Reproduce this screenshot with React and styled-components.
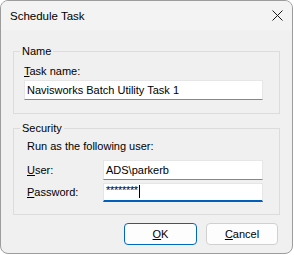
import React from 'react'
import styled, { createGlobalStyle } from 'styled-components'

const Global = createGlobalStyle`
  html, body { margin: 0; background: #fff; }
  body { font-family: "Liberation Sans", Arial, sans-serif; font-size: 11px; color: #000; }
`

const Window = styled.div`
  width: 293px;
  height: 254px;
  box-sizing: border-box;
  border: 1px solid #9c9c9c;
  border-radius: 8px;
  overflow: hidden;
  display: flex;
  flex-direction: column;
  background: #f0f0f0;
`

const TitleBar = styled.div`
  height: 29px;
  flex: none;
  display: flex;
  align-items: center;
  justify-content: space-between;
  padding: 0 9px 0 9px;
  background: #f3f3f3;
  font-size: 11.5px;
`

const Body = styled.div`
  flex: 1;
  display: flex;
  flex-direction: column;
  padding: 15px 12px 0 12px;
`

const Group = styled.fieldset`
  margin: 0 0 ${p => p.$gap || 0}px 0;
  padding: 0;
  border: 1px solid #dcdcdc;
  min-width: 0;
`

const Legend = styled.legend`
  margin-left: 6px;
  padding: 0 2px;
  line-height: 13px;
`

const GroupContent = styled.div`
  display: flex;
  flex-direction: column;
  padding: ${p => p.$pad};
`

const Text = styled.div`
  line-height: 13px;
  margin-top: ${p => p.$top || 0}px;
  margin-bottom: ${p => p.$bottom || 0}px;
`

const Row = styled.div`
  display: flex;
  align-items: center;
  height: 20px;
  margin-top: ${p => p.$top || 0}px;
`

const RowLabel = styled.div`
  width: 76px;
  flex: none;
`

const Field = styled.div`
  box-sizing: border-box;
  height: ${p => p.$focused ? 19 : 20}px;
  width: ${p => p.$width}px;
  background: #fff;
  border: 1px solid #e6e6e6;
  border-bottom: ${p => p.$focused ? '2px solid #005fb8' : '1px solid #878787'};
  padding: 0 2px;
  display: flex;
  align-items: center;
  line-height: 13px;
  white-space: nowrap;
`

const Stars = styled.span`
  letter-spacing: -0.3px;
  position: relative;
  top: -1px;
`

const Caret = styled.span`
  display: inline-block;
  width: 1px;
  height: 13px;
  background: #000;
  margin-left: 1px;
`

const Buttons = styled.div`
  display: flex;
  justify-content: flex-end;
  gap: 9px;
  padding-right: 2px;
  margin-top: 8px;
`

const Button = styled.div`
  box-sizing: border-box;
  width: ${p => p.$w}px;
  height: 22px;
  border-radius: 4px;
  background: #fdfdfd;
  border: 1px solid ${p => p.$primary ? '#0067c0' : '#d0d0d0'};
  display: flex;
  align-items: center;
  justify-content: center;
`

const CloseIcon = () => (
  <svg width="11" height="11" viewBox="0 0 11 11">
    <path d="M0.5 0.5 L10.5 10.5 M10.5 0.5 L0.5 10.5" stroke="#1a1a1a" strokeWidth="1" fill="none" />
  </svg>
)

export default function App() {
  return (
    <>
      <Global />
      <Window>
        <TitleBar>
          <span>Schedule Task</span>
          <CloseIcon />
        </TitleBar>
        <Body>
          <Group $gap={8}>
            <Legend>Name</Legend>
            <GroupContent $pad="0 15px 13px 10px">
              <Text $top={7} $bottom={2}><u>T</u>ask name:</Text>
              <Field $width={239}>Navisworks Batch Utility Task 1</Field>
            </GroupContent>
          </Group>
          <Group>
            <Legend>Security</Legend>
            <GroupContent $pad="0 15px 12px 13px">
              <Text $top={5}>Run as the following user:</Text>
              <Row $top={7}>
                <RowLabel><u>U</u>ser:</RowLabel>
                <Field $width={160}>ADS\parkerb</Field>
              </Row>
              <Row $top={2}>
                <RowLabel><u>P</u>assword:</RowLabel>
                <Field $width={160} $focused><Stars>********</Stars><Caret /></Field>
              </Row>
            </GroupContent>
          </Group>
          <Buttons>
            <Button $w={73} $primary><span><u>O</u>K</span></Button>
            <Button $w={72}><span><u>C</u>ancel</span></Button>
          </Buttons>
        </Body>
      </Window>
    </>
  )
}
